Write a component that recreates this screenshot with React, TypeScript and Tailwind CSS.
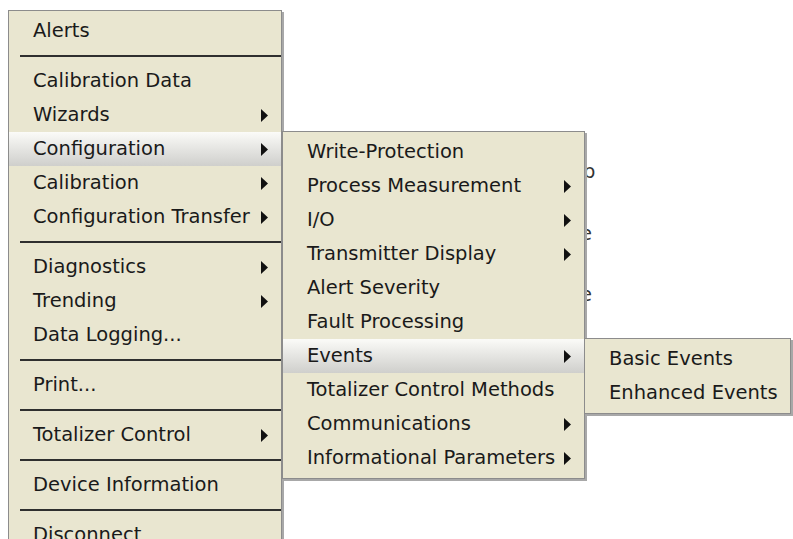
import React from "react";

type Item = { label: string; sub?: boolean; active?: boolean } | "sep";

const mainItems: Item[] = [
  { label: "Alerts" },
  "sep",
  { label: "Calibration Data" },
  { label: "Wizards", sub: true },
  { label: "Configuration", sub: true, active: true },
  { label: "Calibration", sub: true },
  { label: "Configuration Transfer", sub: true },
  "sep",
  { label: "Diagnostics", sub: true },
  { label: "Trending", sub: true },
  { label: "Data Logging..." },
  "sep",
  { label: "Print..." },
  "sep",
  { label: "Totalizer Control", sub: true },
  "sep",
  { label: "Device Information" },
  "sep",
  { label: "Disconnect" },
];

const configItems: Item[] = [
  { label: "Write-Protection" },
  { label: "Process Measurement", sub: true },
  { label: "I/O", sub: true },
  { label: "Transmitter Display", sub: true },
  { label: "Alert Severity" },
  { label: "Fault Processing" },
  { label: "Events", sub: true, active: true },
  { label: "Totalizer Control Methods" },
  { label: "Communications", sub: true },
  { label: "Informational Parameters", sub: true },
];

const eventItems: Item[] = [{ label: "Basic Events" }, { label: "Enhanced Events" }];

function Arrow() {
  return (
    <svg width="7" height="13" viewBox="0 0 7 13" className="shrink-0">
      <path d="M0 0 L7 6.5 L0 13 Z" fill="#111" />
    </svg>
  );
}

function Menu({ items, className }: { items: Item[]; className: string }) {
  return (
    <div
      className={`shrink-0 bg-[#e9e6d0] border border-[#8c8c8c] shadow-[2px_2px_0_#a8a8a8] py-[3px] ${className}`}
    >
      {items.map((it, i) =>
        it === "sep" ? (
          <div key={i} className="h-[16px] flex items-center pl-[11px]">
            <div className="h-[2px] w-full bg-[#2f2f2f]" />
          </div>
        ) : (
          <div
            key={i}
            className={`h-[34px] flex items-center justify-between pl-[24px] pr-[13px] ${
              it.active ? "bg-gradient-to-b from-[#fbfbf8] to-[#cfcfcc]" : ""
            }`}
          >
            <span className="whitespace-nowrap">{it.label}</span>
            {it.sub && <Arrow />}
          </div>
        )
      )}
    </div>
  );
}

export default function App() {
  return (
    <div className="relative w-[793px] h-[539px] overflow-hidden bg-white text-[19.5px] text-[#1a1a1a] font-['DejaVu_Sans',sans-serif] leading-none">
      {/* bits of the window behind the menus */}
      <div className="absolute left-[586px] top-[162px] flex flex-col gap-[42px] text-[#333]">
        <span className="-ml-[3px]">p</span>
        <span className="-ml-[6px]">e</span>
        <span className="-ml-[6px]">e</span>
      </div>
      <div className="relative flex items-start">
        <Menu items={mainItems} className="ml-[8px] mt-[10px] w-[274px]" />
        <Menu items={configItems} className="mt-[131px] w-[303px]" />
        <Menu items={eventItems} className="-ml-[1px] mt-[338px] w-[207px]" />
      </div>
    </div>
  );
}
